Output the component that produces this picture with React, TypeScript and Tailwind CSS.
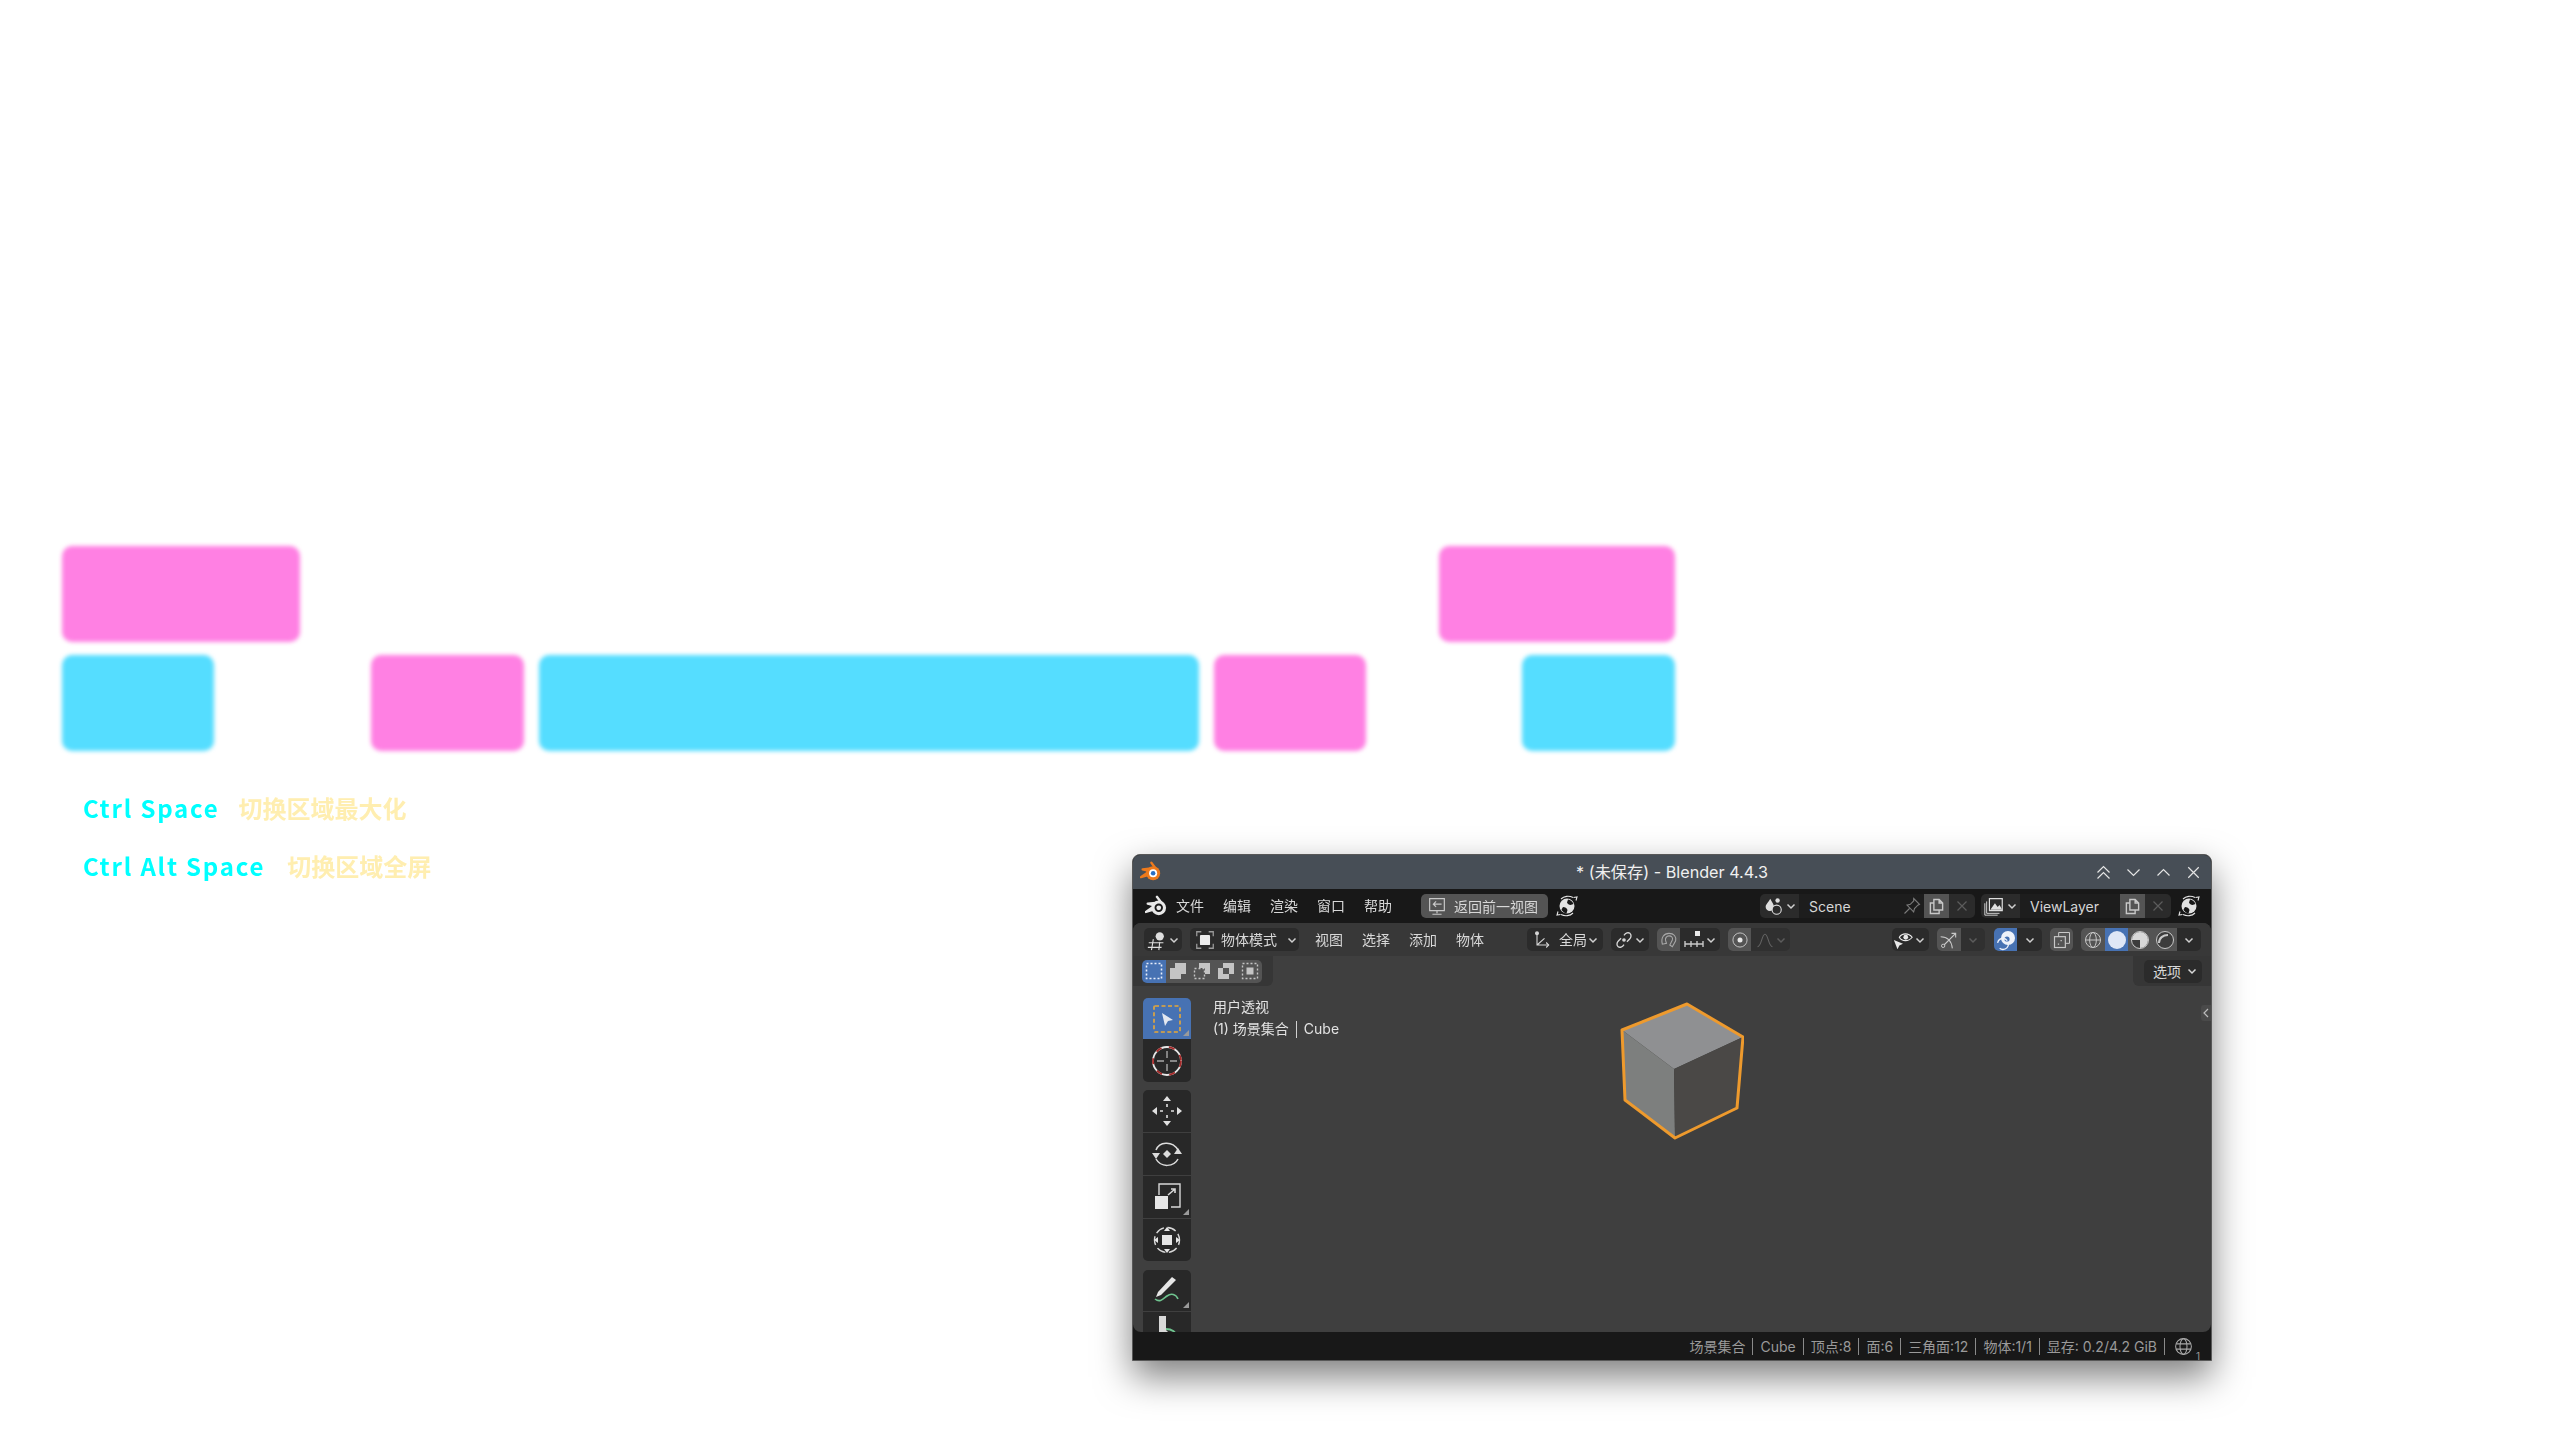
import type { ReactNode } from 'react'

// 通用小图标外壳
function Ic({ size = 20, children, className = '' }: { size?: number; children: ReactNode; className?: string }) {
  return (
    <svg width={size} height={size} viewBox="0 0 24 24" fill="none" stroke="currentColor" strokeWidth="1.6" className={`shrink-0 ${className}`}>
      {children}
    </svg>
  )
}

function Chevron({ className = 'text-[#d0d0d0]' }: { className?: string }) {
  return (
    <svg width="12" height="12" viewBox="0 0 12 12" fill="none" stroke="currentColor" strokeWidth="1.5" className={`shrink-0 ${className}`}>
      <path d="M2.5 4.5 6 8l3.5-3.5" />
    </svg>
  )
}

function BlenderLogo({ size, white }: { size: number; white?: boolean }) {
  const c = white ? '#e8e8e8' : '#ee7a1c'
  return (
    <svg width={size} height={size} viewBox="0 0 24 24" className="shrink-0">
      <path d="M13 2 17.5 8 3 9.5 11 11.5 1 18.5l10-3" fill="none" stroke={c} strokeWidth="2.6" strokeLinejoin="round" strokeLinecap="round" />
      <circle cx="15" cy="14" r="8" fill={c} />
      <circle cx="15" cy="14" r="4.6" fill={white ? '#181818' : '#fff'} />
      <circle cx="15" cy="14" r="2.6" fill={white ? '#e8e8e8' : '#2a6fc4'} />
    </svg>
  )
}

function GlobeScene() {
  return (
    <Ic size={24} className="text-[#e2e2e2]">
      <circle cx="12" cy="12" r="7.5" fill="currentColor" stroke="none" />
      <path d="M13 5.500c2.500.5 4.500 2 5.500 4.500l-3 1c-1.500 0-3-1-3.500-2.500ZM8 13c2 0 4 1 4.500 3l-1 3.500c-2.500-.5-4-2-5-4Z" fill="#181818" stroke="none" />
      <path d="M3 17.500 2 21l3.500-.5M21 6.500 22 3l-3.500.5M6 20.500c4 2 9 1.500 12-1.500M18 3.500c-4-2-9-1.500-12 1.500" strokeWidth="1.1" />
    </Ic>
  )
}

function CopyIcon() {
  return (
    <Ic size={21} className="text-[#c8c8c8]">
      <path d="M9 4h6l4 4v8H9Z M15 4v4h4" fill="#545454" />
      <path d="M9 8H5v12h10v-4" />
    </Ic>
  )
}

function CloseIcon() {
  return (
    <Ic size={18} className="text-[#5c5c5c]">
      <path d="M6 6l12 12M18 6 6 18" />
    </Ic>
  )
}

function DataField({ icon, name, inputWidth, pin }: { icon: ReactNode; name: string; inputWidth: string; pin?: boolean }) {
  return (
    <div className="flex h-6 items-stretch overflow-hidden rounded-[5px] bg-[#2b2b2b]">
      <div className="flex w-[39px] items-center justify-center gap-[1px]">
        {icon}
        <Chevron />
      </div>
      <div className={`flex items-center justify-between bg-[#1d1d1d] pl-[10px] pr-[2px] text-[14px] text-[#d6d6d6] ${inputWidth}`}>
        <span>{name}</span>
        {pin && (
          <Ic size={20} className="text-[#7a7a7a]">
            <path d="M14 3l7 7-2 1-4 4-1 4-8-8 4-1 4-4ZM9 15l-6 6" strokeWidth="1.3" />
          </Ic>
        )}
      </div>
      <div className="flex w-[25px] items-center justify-center bg-[#545454]">
        <CopyIcon />
      </div>
      <div className="flex w-[26px] items-center justify-center">
        <CloseIcon />
      </div>
    </div>
  )
}

function SelectBoxIcon({ variant }: { variant: number }) {
  const light = '#c4c4c4'
  return (
    <svg width="20" height="20" viewBox="0 0 20 20" className="shrink-0">
      {variant === 0 && <rect x="2.500" y="2.500" width="15" height="15" fill="none" stroke="#e8eefc" strokeWidth="1.6" strokeDasharray="2 2" />}
      {variant === 1 && <path d="M7 2h11v11h-5v5H2V7h5Z" fill={light} />}
      {variant === 2 && (
        <>
          <rect x="2.500" y="7.500" width="10" height="10" fill="none" stroke={light} strokeWidth="1.4" strokeDasharray="2 2" />
          <path d="M7 2h11v11h-5V7H7Z" fill={light} />
        </>
      )}
      {variant === 3 && <path fillRule="evenodd" d="M7 2h11v11h-5v5H2V7h5Zm0 5v6h6V7Z" fill={light} />}
      {variant === 4 && (
        <>
          <rect x="2.500" y="2.500" width="15" height="15" fill="none" stroke={light} strokeWidth="1.4" strokeDasharray="2 2" />
          <rect x="6.500" y="6.500" width="7" height="7" fill={light} />
        </>
      )}
    </svg>
  )
}

function Corner() {
  return (
    <svg width="6" height="6" viewBox="0 0 6 6" className="absolute bottom-[3px] right-[2px]">
      <path d="M6 0v6H0Z" fill="#9a9a9a" />
    </svg>
  )
}

function ToolBtn({ children, active, corner, h = 'h-[42px]', rounded = '' }: { children: ReactNode; active?: boolean; corner?: boolean; h?: string; rounded?: string }) {
  return (
    <div className={`relative flex w-[48px] items-center justify-center ${h} ${rounded} ${active ? 'bg-[#4772b3]' : 'bg-[#282828]'}`}>
      {children}
      {corner && <Corner />}
    </div>
  )
}

function Toolbar() {
  return (
    <div className="flex flex-col">
      <ToolBtn active corner h="h-[41px]" rounded="rounded-t-[5px]">
        <svg width="32" height="32" viewBox="0 0 32 32">
          <rect x="3" y="3" width="26" height="26" rx="1" fill="none" stroke="#e8a838" strokeWidth="1.6" strokeDasharray="4 2.500" />
          <path d="M11 10 22 17l-5 1-3 5Z" fill="#e4e8f0" />
        </svg>
      </ToolBtn>
      <ToolBtn h="h-[43px]" rounded="rounded-b-[5px]">
        <svg width="32" height="32" viewBox="0 0 32 32" fill="none">
          <circle cx="16" cy="16" r="14" stroke="#e8e8e8" strokeWidth="1.8" />
          <circle cx="16" cy="16" r="14" stroke="#a62a2a" strokeWidth="1.8" strokeDasharray="6 7.500" />
          <path d="M16 6v7M16 19v7M6 16h7M19 16h7" stroke="#a8a8a8" strokeWidth="1.4" />
        </svg>
      </ToolBtn>
      <div className="mt-[8px] flex flex-col gap-[1px]">
        <ToolBtn rounded="rounded-t-[5px]">
          <svg width="32" height="32" viewBox="0 0 32 32" fill="#e0e0e0">
            <path d="M16 1l4 5h-8ZM16 31l-4-5h8ZM1 16l5-4v8ZM31 16l-5 4v-8Z" />
            <path d="M16 9v3M16 20v3M9 16h3M20 16h3" stroke="#e0e0e0" strokeWidth="1.6" />
          </svg>
        </ToolBtn>
        <ToolBtn>
          <svg width="32" height="32" viewBox="0 0 32 32" fill="none" stroke="#dcdcdc" strokeWidth="1.5">
            <path d="M5 12C8 4 21 2 27 12M27 21c-4 8-17 9-22 0" />
            <path d="M16 12l4 4-4 4-4-4ZM1 15h8l-4 6ZM23 16h8l-4-6Z" fill="#dcdcdc" stroke="none" />
          </svg>
        </ToolBtn>
        <ToolBtn corner>
          <svg width="32" height="32" viewBox="0 0 32 32" fill="none" stroke="#d8d8d8" strokeWidth="1.4">
            <path d="M8 14V3h21v23h-9" />
            <rect x="4" y="15" width="13" height="13" fill="#e6e6e6" stroke="none" />
            <path d="M17 14 24 8M20 8h4v4" strokeWidth="1.6" />
          </svg>
        </ToolBtn>
        <ToolBtn rounded="rounded-b-[5px]">
          <svg width="32" height="32" viewBox="0 0 32 32" fill="none" stroke="#d8d8d8" strokeWidth="1.4">
            <circle cx="16" cy="16" r="12.500" strokeDasharray="9 3.600" strokeDashoffset="4" />
            <rect x="11" y="11" width="10" height="10" fill="#e6e6e6" stroke="none" />
            <path d="M16 3l3 4h-6ZM16 29l-3-4h6ZM3 16l4-3v6ZM29 16l-4 3v-6Z" fill="#e6e6e6" stroke="none" />
          </svg>
        </ToolBtn>
      </div>
      <div className="mt-[9px] flex flex-col gap-[1px]">
        <ToolBtn corner h="h-[41px]" rounded="rounded-t-[5px]">
          <svg width="34" height="34" viewBox="0 0 34 34" fill="none">
            <path d="M22 3l4 3L11 21l-5 2 2-5Z" fill="#e6e6e6" />
            <path d="M5 25c5 4 8 0 12-3s9-2 11 3" stroke="#6fc48f" strokeWidth="1.6" />
          </svg>
        </ToolBtn>
        <ToolBtn h="h-[24px]">
          <div className="h-[24px] w-[34px] overflow-hidden">
            <svg width="34" height="34" viewBox="0 0 34 34" fill="none">
              <path d="M9 4h7v14l2 2v4H9Z" fill="#d8d8d8" />
              <path d="M16 17c6 0 10 3 10 7" stroke="#6fc48f" strokeWidth="2" />
            </svg>
          </div>
        </ToolBtn>
      </div>
    </div>
  )
}

function Cube() {
  return (
    <svg width="124" height="138" viewBox="1620 1001 124 138" className="absolute left-[487px] top-[46px]">
      <path d="M1687 1003 1622 1029 1674 1068 1743 1036Z" fill="#8f9092" />
      <path d="M1622 1029 1674 1068 1675 1137 1625 1099Z" fill="#7d7f7e" />
      <path d="M1674 1068 1743 1036 1737 1107 1675 1137Z" fill="#4a4846" />
      <path d="M1687 1003 1743 1036 1737 1107 1675 1137 1625 1099 1622 1029Z" fill="none" stroke="#ee9a2d" strokeWidth="3" strokeLinejoin="round" />
    </svg>
  )
}

const menuClass = 'w-[28px] text-[14px] leading-none whitespace-nowrap'

function BlenderWindow() {
  return (
    <div className="mt-[103px] flex h-[507px] w-[1080px] shrink-0 flex-col overflow-hidden rounded-t-[8px] border border-[#585858] bg-[#181818] shadow-[0_16px_36px_rgba(0,0,0,0.5)] blur-[0.7px] [font-family:Inter,'Noto_Sans_CJK_SC',sans-serif]">
      {/* 标题栏 */}
      <div className="relative flex h-[34px] shrink-0 items-center justify-center bg-[#474e56] text-[16.2px] text-[#f0f0f0]">
        <div className="absolute left-[7px] top-[6px]">
          <BlenderLogo size={21} />
        </div>
        <span>* (未保存) - Blender 4.4.3</span>
        <div className="absolute right-[10px] top-0 flex h-full items-center gap-[15px] text-[#e4e4e4]">
          <Ic size={15} className="scale-[1.2]"><path d="M4 12l8-8 8 8M4 20l8-8 8 8" /></Ic>
          <Ic size={15} className="scale-[1.2]"><path d="M4 8l8 8 8-8" /></Ic>
          <Ic size={15} className="scale-[1.2]"><path d="M4 16l8-8 8 8" /></Ic>
          <Ic size={15} className="scale-[1.2]"><path d="M5 5l14 14M19 5 5 19" /></Ic>
        </div>
      </div>

      {/* 顶部菜单 */}
      <div className="flex h-[34px] shrink-0 items-center bg-[#181818] pl-[12px] pr-[10px] text-[#d8d8d8]">
        <BlenderLogo size={22} white />
        <div className="ml-[9px] flex gap-[19px] text-[14px]">
          {['文件', '编辑', '渲染', '窗口', '帮助'].map((m) => (
            <span key={m} className={menuClass}>{m}</span>
          ))}
        </div>
        <div className="ml-[29px] flex h-6 w-[127px] items-center rounded-[5px] bg-[#545454] pl-[5px] text-[14px]">
          <Ic size={22} className="text-[#c8c8c8]">
            <path d="M4 4h16v13H4ZM12 17v3M7 21h10M17 10H8M11 7l-3 3 3 3" strokeWidth="1.3" />
          </Ic>
          <span className="ml-[6px] whitespace-nowrap">返回前一视图</span>
        </div>
        <div className="ml-[7px]"><GlobeScene /></div>
        <div className="flex-1" />
        <DataField
          name="Scene"
          inputWidth="w-[125px]"
          pin
          icon={
            <Ic size={22} className="text-[#dedede]">
              <path d="M9 4c2 4 4 6 4 9a4.500 4.500 0 0 1-9 0c0-3 3-5 5-9Z" fill="currentColor" stroke="none" />
              <circle cx="17" cy="6" r="2.400" fill="currentColor" stroke="none" />
              <circle cx="16" cy="16" r="5" fill="#2b2b2b" strokeWidth="1.2" />
            </Ic>
          }
        />
        <div className="ml-[6px]">
          <DataField
            name="ViewLayer"
            inputWidth="w-[100px]"
            icon={
              <Ic size={22} className="text-[#dedede]">
                <path d="M7 4h14v13H7Z" fill="#2b2b2b" strokeWidth="1.3" />
                <path d="M8 16l5-7 3 4 2-2 3 5Z" fill="currentColor" stroke="none" />
                <path d="M4 7v13h14M2 9v13h14" strokeWidth="1" />
              </Ic>
            }
          />
        </div>
        <div className="ml-[6px]"><GlobeScene /></div>
      </div>

      {/* 主区域 */}
      <div className="flex min-h-0 flex-1 flex-col overflow-hidden rounded-[8px] bg-[#3f3f3f]">
        <div className="flex h-[33px] shrink-0 items-center bg-[#383838] pl-[11px] pr-[10px] text-[14px] text-[#d8d8d8]">
          <div className="flex h-[23px] w-[38px] items-center justify-center rounded-[5px] bg-[#2b2b2b]">
            <Ic size={22} className="text-[#dedede]">
              <circle cx="15" cy="8" r="4.500" fill="currentColor" stroke="none" />
              <path d="M3 15h16M2 20h15M8 11 6 23M15 14l-1 9" strokeWidth="1.2" />
            </Ic>
            <Chevron />
          </div>
          <div className="ml-[8px] flex h-[23px] w-[109px] items-center rounded-[5px] bg-[#2b2b2b] pl-[4px]">
            <Ic size={22} className="text-[#9a9a9a]">
              <path d="M3 8V3h5M16 3h5v5M21 16v5h-5M8 21H3v-5" strokeWidth="1.4" />
              <rect x="6.500" y="6.500" width="11" height="11" rx="1" fill="#ececec" stroke="none" />
            </Ic>
            <span className="ml-[5px] whitespace-nowrap">物体模式</span>
            <Chevron className="ml-[9px] text-[#d0d0d0]" />
          </div>
          <div className="ml-[16px] flex gap-[19px]">
            {['视图', '选择', '添加', '物体'].map((m) => (
              <span key={m} className={menuClass}>{m}</span>
            ))}
          </div>
          <div className="ml-[43px] flex h-[23px] w-[76px] items-center rounded-[5px] bg-[#2b2b2b] pl-[5px]">
            <Ic size={20} className="text-[#d6d6d6]">
              <path d="M6 4v14h14M6 18l9-8" strokeWidth="1.3" />
              <circle cx="6" cy="4" r="1.600" fill="currentColor" />
              <path d="M17 15l3 3-3 3" strokeWidth="1.3" />
            </Ic>
            <span className="ml-[7px] whitespace-nowrap">全局</span>
            <Chevron />
          </div>
          <div className="ml-[8px] flex h-[23px] w-[38px] items-center justify-center rounded-[5px] bg-[#2b2b2b]">
            <Ic size={20} className="text-[#d6d6d6]">
              <path d="M12 6.500c2-3 5-4 7-2.500s2 4.500-.5 7l-3 3M12 17.500c-2 3-5 4-7 2.500s-2-4.500.5-7l3-3" strokeWidth="1.6" />
              <circle cx="12" cy="12" r="2.200" fill="currentColor" stroke="none" />
            </Ic>
            <Chevron />
          </div>
          <div className="ml-[8px] flex h-[23px] w-[23px] items-center justify-center rounded-l-[5px] bg-[#545454]">
            <Ic size={20} className="text-[#a8a8a8]">
              <path d="M4 17C2 9 6 4 12 4s9 4 8 9l-4 7-3-2 3-6c1-3-1-5-4-5s-5 3-4 6l1 3Z" strokeWidth="1.3" />
            </Ic>
          </div>
          <div className="flex h-[23px] w-[40px] items-center justify-center rounded-r-[5px] bg-[#2b2b2b]">
            <svg width="22" height="20" viewBox="0 0 22 20" fill="none" stroke="#c8c8c8" strokeWidth="1.4" className="shrink-0">
              <path d="M2 11v6M8 11v6M14 11v6M20 11v6M2 14h18" />
              <rect x="12" y="1" width="5" height="5" fill="#e8e8e8" stroke="none" />
            </svg>
            <Chevron />
          </div>
          <div className="ml-[8px] flex h-[23px] w-[23px] items-center justify-center rounded-l-[5px] bg-[#545454]">
            <Ic size={20} className="text-[#c0c0c0]">
              <circle cx="12" cy="12" r="8.500" strokeWidth="1.2" />
              <circle cx="12" cy="12" r="3" fill="#e8e8e8" stroke="none" />
            </Ic>
          </div>
          <div className="flex h-[23px] w-[39px] items-center justify-center rounded-r-[5px] bg-[#303030]">
            <Ic size={20} className="text-[#636363]"><path d="M3 20c5 0 5-15 9-15s4 15 9 15" strokeWidth="1.3" /></Ic>
            <Chevron className="text-[#5c5c5c]" />
          </div>
          <div className="flex-1" />
          <div className="flex h-[23px] w-[37px] items-center justify-center rounded-[5px] bg-[#2b2b2b] pr-[3px]">
            <Ic size={22} className="text-[#e8e8e8]">
              <path d="M8 9c3-5 10-5 14 0-4 5-11 5-14 0Z" strokeWidth="1.3" />
              <circle cx="15" cy="9" r="2.600" fill="currentColor" stroke="none" />
              <path d="M2 12l10 4-4 2-2 4Z" fill="currentColor" stroke="none" />
            </Ic>
            <Chevron />
          </div>
          <div className="ml-[8px] flex h-[23px] w-[24px] items-center justify-center rounded-l-[5px] bg-[#545454]">
            <Ic size={20} className="text-[#c8c8c8]">
              <circle cx="5" cy="19" r="2" strokeWidth="1.2" />
              <path d="M2 8c8 0 13 5 14 14M6 18 20 4M15 4h5v5" strokeWidth="1.3" />
            </Ic>
          </div>
          <div className="flex h-[23px] w-[24px] items-center justify-center rounded-r-[5px] bg-[#303030]">
            <Chevron className="text-[#5c5c5c]" />
          </div>
          <div className="ml-[9px] flex h-[23px] w-[23px] items-center justify-center rounded-l-[5px] bg-[#4772b3]">
            <svg width="22" height="22" viewBox="0 0 22 22" fill="none">
              <circle cx="13" cy="9" r="7" fill="#eef2fa" />
              <circle cx="12" cy="10" r="2.600" fill="#4772b3" />
              <circle cx="8" cy="15" r="5.500" stroke="#eef2fa" strokeWidth="1.3" strokeDasharray="12 6" />
            </svg>
          </div>
          <div className="flex h-[23px] w-[25px] items-center justify-center rounded-r-[5px] bg-[#2b2b2b]">
            <Chevron />
          </div>
          <div className="ml-[8px] flex h-[23px] w-[23px] items-center justify-center rounded-[5px] bg-[#545454]">
            <Ic size={20} className="text-[#c8c8c8]">
              <path d="M8 8V3h13v13h-5" strokeWidth="1.2" />
              <rect x="3" y="8" width="13" height="13" strokeWidth="1.4" />
              <path d="M7 17h1.500M11 12v1.500" strokeWidth="1.6" />
            </Ic>
          </div>
          <div className="ml-[8px] flex h-[23px] items-stretch overflow-hidden rounded-[5px]">
            <div className="flex w-[24px] items-center justify-center bg-[#545454]">
              <Ic size={20} className="text-[#c8c8c8]">
                <circle cx="12" cy="12" r="9" strokeWidth="1.2" />
                <ellipse cx="12" cy="12" rx="4" ry="9" strokeWidth="1.2" />
                <path d="M3 12h18" strokeWidth="1.2" />
              </Ic>
            </div>
            <div className="flex w-[23px] items-center justify-center bg-[#4772b3]">
              <div className="h-[18px] w-[18px] rounded-full bg-[#dfe7f6]" />
            </div>
            <div className="flex w-[24px] items-center justify-center bg-[#545454]">
              <svg width="20" height="20" viewBox="0 0 20 20">
                <circle cx="10" cy="10" r="8.500" fill="#3c3c3c" stroke="#c8c8c8" strokeWidth="1" />
                <path d="M10 2a8 8 0 0 1 0 16V10H2a8 8 0 0 1 8-8Z" fill="#d8d8d8" />
              </svg>
            </div>
            <div className="flex w-[25px] items-center justify-center bg-[#545454]">
              <svg width="20" height="20" viewBox="0 0 20 20" fill="none" stroke="#c8c8c8">
                <circle cx="10" cy="10" r="8.500" fill="#3c3c3c" />
                <path d="M4 13c0-5 4-8 9-8" strokeWidth="2" />
              </svg>
            </div>
            <div className="flex w-[24px] items-center justify-center bg-[#2b2b2b]">
              <Chevron />
            </div>
          </div>
        </div>

        {/* 视口 */}
        <div className="relative flex min-h-0 flex-1 overflow-hidden">
          <div className="absolute left-0 top-0 flex h-[30px] w-[140px] items-center rounded-br-[6px] bg-[#363636] pl-[9px]">
            {[0, 1, 2, 3, 4].map((v) => (
              <div key={v} className={`flex h-[23px] w-[24px] items-center justify-center first:rounded-l-[5px] last:rounded-r-[5px] ${v === 0 ? 'bg-[#4772b3]' : 'bg-[#545454]'}`}>
                <SelectBoxIcon variant={v} />
              </div>
            ))}
          </div>
          <div className="absolute right-0 top-0 flex h-[30px] w-[78px] items-center justify-end rounded-bl-[6px] bg-[#363636] pr-[9px]">
            <div className="flex h-[23px] w-[58px] items-center rounded-[5px] bg-[#2b2b2b] pl-[9px] text-[14px] text-[#d8d8d8]">
              <span className="whitespace-nowrap">选项</span>
              <Chevron className="ml-[5px]" />
            </div>
          </div>
          <div className="absolute right-0 top-[49px] flex h-[16px] w-[10px] items-center justify-center rounded-l-[3px] bg-[#4a4a4a]">
            <svg width="6" height="10" viewBox="0 0 6 10" fill="none" stroke="#bcbcbc" strokeWidth="1.2"><path d="M5 1 1 5l4 4" /></svg>
          </div>
          <div className="ml-[10px] mt-[42px] shrink-0">
            <Toolbar />
          </div>
          <div className="ml-[22px] mt-[40px] text-[14px] leading-[22px] text-[#e2e2e2]">
            <div>用户透视</div>
            <div className="flex items-center whitespace-nowrap">
              (1) 场景集合
              <span className="mx-[7px] h-[17px] w-[1px] bg-[#d0d0d0]" />
              Cube
            </div>
          </div>
          <Cube />
        </div>
      </div>

      {/* 状态栏 */}
      <div className="flex h-[28px] shrink-0 items-center justify-end gap-[7px] bg-[#181818] pr-[11px] text-[14px] text-[#9a9a9a]">
        {['场景集合', 'Cube', '顶点:8', '面:6', '三角面:12', '物体:1/1', '显存: 0.2/4.2 GiB'].map((s) => (
          <span key={s} className="flex items-center gap-[7px] whitespace-nowrap">
            {s}
            <span className="h-[17px] w-[1px] bg-[#8a8a8a]" />
          </span>
        ))}
        <div className="relative ml-[1px] pr-[6px]">
          <Ic size={21} className="text-[#a8a8a8]">
            <circle cx="12" cy="12" r="9" strokeWidth="1.2" />
            <ellipse cx="12" cy="12" rx="4" ry="9" strokeWidth="1.2" />
            <path d="M3.500 9h17M3.500 15h17" strokeWidth="1.2" />
          </Ic>
          <span className="absolute bottom-[-4px] right-0 text-[10px] leading-none">1</span>
        </div>
      </div>
    </div>
  )
}

function Block({ color, width }: { color: 'pink' | 'cyan'; width: string }) {
  return <div className={`h-[96px] rounded-[10px] blur-[2px] ${color === 'pink' ? 'bg-[#ff80e3]' : 'bg-[#55ddff]'} ${width}`} />
}

export default function App() {
  return (
    <div className="h-[1440px] w-[2560px] overflow-hidden bg-white pl-[62px] pt-[546px] [font-family:'Noto_Sans_CJK_SC','Noto_Sans',sans-serif]">
      <div className="flex w-[1613px] justify-between">
        <Block color="pink" width="w-[238px]" />
        <Block color="pink" width="w-[236px]" />
      </div>
      <div className="mt-[13px] flex w-[1613px]">
        <Block color="cyan" width="w-[153px]" />
        <div className="ml-[157px]"><Block color="pink" width="w-[153px]" /></div>
        <div className="ml-[15px]"><Block color="cyan" width="w-[660px]" /></div>
        <div className="ml-[15px]"><Block color="pink" width="w-[152px]" /></div>
        <div className="ml-[156px]"><Block color="cyan" width="w-[153px]" /></div>
      </div>
      <div className="flex">
        <div className="w-[1070px] shrink-0 pl-[21px] pt-[28px] text-[24px] font-bold leading-[58px] tracking-[1.8px] blur-[0.4px]">
          <div className="whitespace-nowrap">
            <span className="text-[#00ffff]">Ctrl Space</span>
            <span className="ml-[19px] text-[#ffeeb0] tracking-normal">切换区域最大化</span>
          </div>
          <div className="whitespace-nowrap">
            <span className="text-[#00ffff]">Ctrl Alt Space</span>
            <span className="ml-[22px] text-[#ffeeb0] tracking-normal">切换区域全屏</span>
          </div>
        </div>
        <BlenderWindow />
      </div>
    </div>
  )
}
